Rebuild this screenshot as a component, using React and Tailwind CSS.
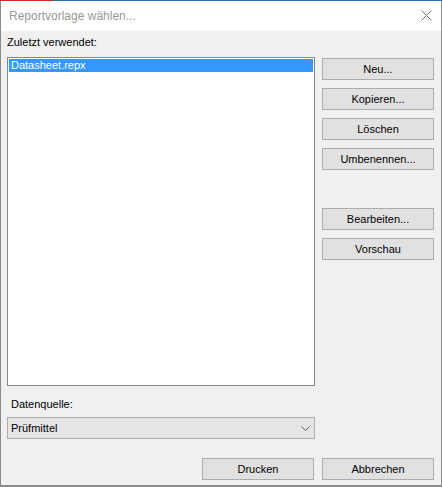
export default function App() {
  const font = { fontFamily: '"Liberation Sans", Arial, sans-serif' };
  const Btn = ({ children, className = "" }) => (
    <div
      className={`flex h-[22px] w-[112px] items-center justify-center border border-[#adadad] bg-[#e1e1e1] text-[11px] leading-[13px] text-black ${className}`}
    >
      {children}
    </div>
  );
  return (
    <div className="flex h-[487px] w-[442px] flex-col overflow-hidden bg-[#6b7a8a]" style={font}>
      <div className="flex h-[1px] w-full">
        <div className="h-full w-[54px] bg-[#c4322a]" />
        <div className="h-full flex-1 bg-[#2f6fb5]" />
      </div>
      <div className="flex h-[485px] w-full flex-col border-x border-b border-[#8a8a8a] bg-[#f0f0f0]">
        <div className="flex h-[30px] shrink-0 items-center justify-between bg-white pl-[8px] pr-[9px]">
          <span className="text-[12px] leading-[14px] text-[#999999]">Reportvorlage wählen...</span>
          <svg width="11" height="11" viewBox="0 0 11 11" className="mb-[1px]">
            <path d="M0.5 0.5 L10.5 10.5 M10.5 0.5 L0.5 10.5" stroke="#7a7a7a" strokeWidth="1" fill="none" />
          </svg>
        </div>
        <div className="flex flex-1 flex-col pl-[6px] pt-[5px]">
          <div className="text-[11px] leading-[13px] text-black">Zuletzt verwendet:</div>
          <div className="mt-[8px] flex">
            <div className="h-[329px] w-[308px] border border-[#828790] bg-white p-[1px]">
              <div className="h-[13px] bg-[#3399ff] pl-[2px] text-[11px] leading-[13px] text-white">
                Datasheet.repx
              </div>
            </div>
            <div className="mt-[1px] ml-[7px] flex flex-col">
              <Btn>Neu...</Btn>
              <Btn className="mt-[8px]">Kopieren...</Btn>
              <Btn className="mt-[8px]">Löschen</Btn>
              <Btn className="mt-[8px]">Umbenennen...</Btn>
              <Btn className="mt-[38px]">Bearbeiten...</Btn>
              <Btn className="mt-[8px]">Vorschau</Btn>
            </div>
          </div>
          <div className="mt-[12px] pl-[4px] text-[11px] leading-[13px] text-black">Datenquelle:</div>
          <div className="mt-[6px] flex h-[22px] w-[308px] items-center justify-between border border-[#adadad] bg-[#e5e5e5] pl-[3px] pr-[4px]">
            <span className="text-[11px] leading-[13px] text-black">Prüfmittel</span>
            <svg width="9" height="5" viewBox="0 0 9 5">
              <path d="M0.5 0.5 L4.5 4.5 L8.5 0.5" stroke="#606060" strokeWidth="1" fill="none" />
            </svg>
          </div>
          <div className="mt-[19px] flex pl-[195px]">
            <Btn>Drucken</Btn>
            <Btn className="ml-[8px]">Abbrechen</Btn>
          </div>
        </div>
      </div>
      <div className="h-[1px] w-full bg-[#8a8a8a]" />
    </div>
  );
}
